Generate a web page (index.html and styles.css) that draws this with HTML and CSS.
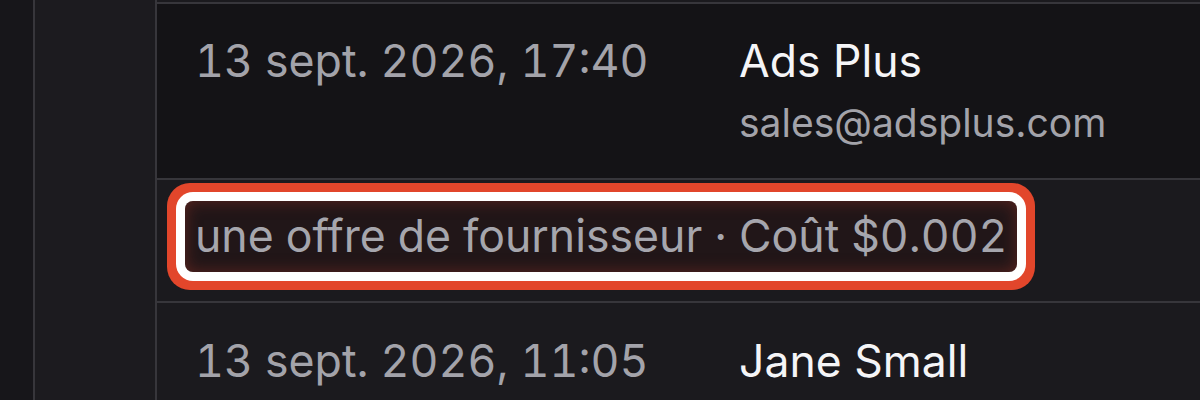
FILE: index.html
```html
<!DOCTYPE html>
<html lang="fr">
<head>
<meta charset="utf-8">
<title>Messages</title>
<link rel="stylesheet" href="styles.css">
</head>
<body>
<div class="app">
  <div class="rail"></div>
  <aside class="sidebar"></aside>
  <main class="list">
    <div class="row row-dark">
      <div class="date">13 sept. 2026, 17:40</div>
      <div class="sender">
        <div class="name">Ads Plus</div>
        <div class="email">sales@adsplus.com</div>
      </div>
    </div>
    <div class="row row-note">
      <span class="note">une offre de fournisseur · Coût $0.002</span>
    </div>
    <div class="row">
      <div class="date">13 sept. 2026, 11:05</div>
      <div class="sender">
        <div class="name">Jane Small</div>
      </div>
    </div>
  </main>
</div>
</body>
</html>
```
FILE: styles.css
```css
* { box-sizing: border-box; }
html, body {
  margin: 0;
  height: 400px;
  overflow: hidden;
  background: #1b1a1e;
}
body {
  font-family: Inter, "Noto Sans", sans-serif;
  -webkit-font-smoothing: antialiased;
}
.app {
  display: flex;
  height: 400px;
}
.rail {
  width: 35px;
  background: #17161a;
  border-right: 2px solid #37363b;
  flex: none;
}
.sidebar {
  width: 122px;
  background: #1c1b1f;
  border-right: 2px solid #37363b;
  flex: none;
}
.list {
  flex: 1;
  padding-top: 2px;
  background: #1b1a1e;
}
.row {
  display: flex;
  border-top: 2px solid #37363b;
  padding: 32px 0 31px 38px;
  background: #1b1a1e;
}
.row-dark {
  background: #141316;
  padding-top: 31px;
}
.date {
  width: 544px;
  flex: none;
  font-size: 44.7px;
  line-height: 53px;
  color: #a3a3aa;
  font-variant-numeric: tabular-nums;
}
.name {
  font-size: 44.5px;
  line-height: 53px;
  color: #f5f5f7;
}
.email {
  margin-top: 11px;
  font-size: 39px;
  line-height: 48px;
  color: #a3a3aa;
}
.row-note {
  padding: 21px 0 29px 28px;
}
.note {
  display: inline-block;
  padding: 9px 10px;
  font-size: 44.6px;
  line-height: 53px;
  color: #a6a6ad;
  font-variant-numeric: tabular-nums;
  border-radius: 8px;
  background: #211618;
  box-shadow:
    inset 0 0 16px rgba(150, 50, 38, 0.5),
    0 0 0 9px #ffffff,
    0 0 0 18px #e2462b;
}
```
